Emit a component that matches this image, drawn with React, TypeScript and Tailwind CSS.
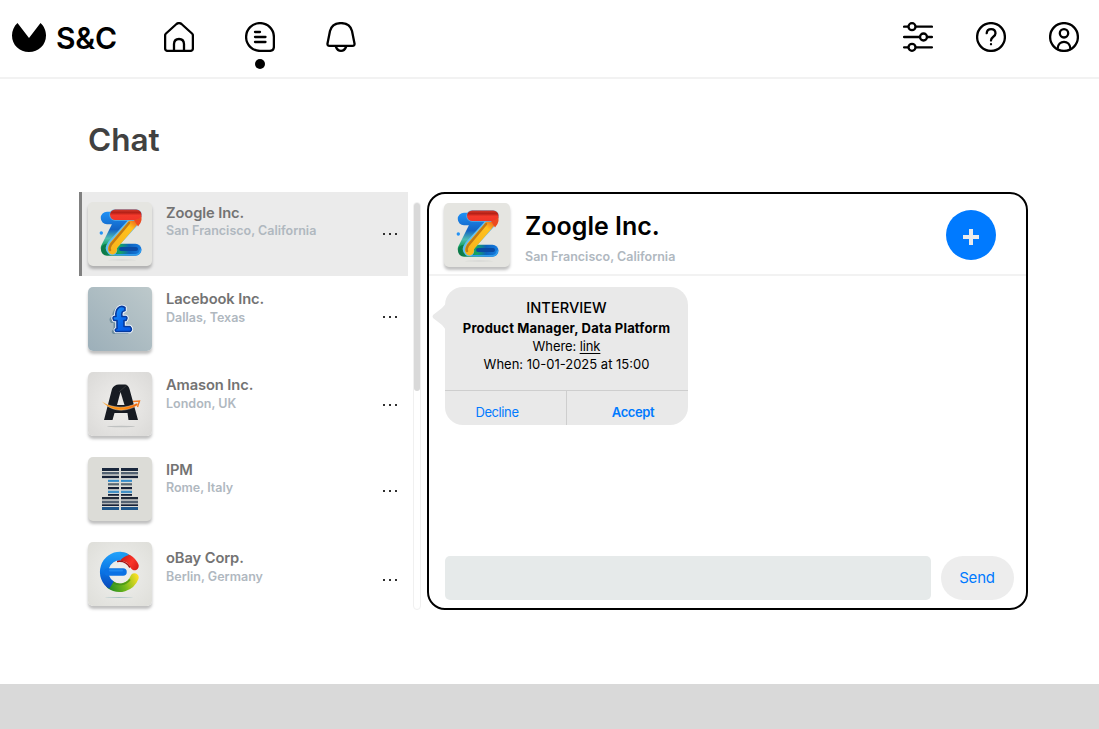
import React from "react";

type LogoProps = { className?: string };

function ZoogleLogo({ className }: LogoProps) {
  const id = React.useId();
  const red = id + "r", blue = id + "b", green = id + "g", yellow = id + "y";
  return (
    <svg viewBox="0 0 64 64" className={className}>
      <defs>
        <linearGradient id={blue} gradientUnits="userSpaceOnUse" x1="20" y1="10" x2="20" y2="54">
          <stop offset="0" stopColor="#1e90f5" />
          <stop offset="0.4" stopColor="#1263c4" />
          <stop offset="0.6" stopColor="#4fbdb0" />
          <stop offset="0.75" stopColor="#17a565" />
          <stop offset="1" stopColor="#076a45" />
        </linearGradient>
        <linearGradient id={green} gradientUnits="userSpaceOnUse" x1="16" y1="0" x2="52" y2="0">
          <stop offset="0" stopColor="#0b7a48" />
          <stop offset="0.45" stopColor="#15a565" />
          <stop offset="0.7" stopColor="#0d62bd" />
          <stop offset="1" stopColor="#1579dd" />
        </linearGradient>
        <linearGradient id={yellow} gradientUnits="userSpaceOnUse" x1="50" y1="14" x2="24" y2="48">
          <stop offset="0" stopColor="#e8401c" />
          <stop offset="0.15" stopColor="#f0741c" />
          <stop offset="0.32" stopColor="#ffc01f" />
          <stop offset="1" stopColor="#f8b51c" />
        </linearGradient>
        <linearGradient id={red} x1="0" y1="0" x2="0" y2="1">
          <stop offset="0" stopColor="#d43a2c" />
          <stop offset="0.3" stopColor="#b52017" />
          <stop offset="0.55" stopColor="#f3392b" />
          <stop offset="1" stopColor="#f0352a" />
        </linearGradient>
      </defs>
      <ellipse cx="34" cy="58" rx="14" ry="0.500" fill="#cfd1cf" />
      <path d="M19 16H34L19 46" fill="none" stroke={`url(#${blue})`} strokeWidth="12.500" strokeLinecap="round" strokeLinejoin="round" />
      <path d="M19 47.800H47.500" fill="none" stroke={`url(#${green})`} strokeWidth="12" strokeLinecap="round" />
      <path d="M33 47H48" fill="none" stroke="#0a4aa3" strokeWidth="4" strokeLinecap="round" />
      <path d="M26 52.800H48Q52 52 52.500 48" fill="none" stroke="#2f9ded" strokeWidth="1.600" strokeLinecap="round" />
      <path d="M45 20.500L24.500 43Q22 46 24 48" fill="none" stroke="#62bdf0" strokeWidth="10.500" strokeLinecap="round" />
      <path d="M47.500 18L26 43Q24 46 24.500 48" fill="none" stroke={`url(#${yellow})`} strokeWidth="8.800" strokeLinecap="round" />
      <path d="M41 21L23 42.500Q21 46 22 48" fill="none" stroke="#c27a14" strokeWidth="2.500" strokeLinecap="round" />
      <path d="M27 13H48" fill="none" stroke="#55aee8" strokeWidth="11.500" strokeLinecap="round" />
      <rect x="22" y="7.500" width="31.500" height="10.500" rx="5.250" fill={`url(#${red})`} />
      <path d="M46 18Q53 17 53.500 13V18Q53 21.500 50 24.500Z" fill="#ec4a20" />
      <circle cx="13.300" cy="31" r="1.700" fill="#2493f6" />
    </svg>
  );
}

function LacebookLogo({ className }: LogoProps) {
  const id = React.useId();
  const shape =
    "M37 21C32 18 27 22 28 30H26Q24 31 26 34H29V42Q26 43 28 45H42Q45 43 42 40H36V34H38Q40 31 38 30H34C33 25 35 25 37 24Z";
  return (
    <svg viewBox="0 0 64 64" className={className}>
      <linearGradient id={id} x1="0" y1="0" x2="1" y2="1">
        <stop offset="0" stopColor="#209bff" />
        <stop offset="0.55" stopColor="#0867ed" />
        <stop offset="1" stopColor="#0755e5" />
      </linearGradient>
      <path d={shape} fill="#5b7c91" stroke="#6f8e9f" strokeWidth="2" transform="translate(-2.5 1)" />
      <path d={shape} fill="#fff" stroke="#f5faff" strokeWidth="3.400" strokeLinejoin="round" transform="translate(0 -0.500)" />
      <path d={shape} fill={`url(#${id})`} stroke="#063a9d" strokeWidth="1.600" strokeLinejoin="round" transform="translate(0 -0.500)" />
    </svg>
  );
}

function AmasonLogo({ className }: LogoProps) {
  const id = React.useId();
  return (
    <svg viewBox="0 0 64 64" className={className}>
      <linearGradient id={id} x1="0" y1="0" x2="1" y2="0">
        <stop offset="0" stopColor="#f39316" />
        <stop offset="0.6" stopColor="#ff8a0b" />
        <stop offset="1" stopColor="#ee620b" />
      </linearGradient>
      <ellipse cx="33" cy="54.5" rx="14" ry="0.700" fill="#bfc1c1" />
      <path d="M16 48L24 17Q26 12.5 31 12.5H37Q40 12.5 41.5 17L50 48H40.500L39.5 41H26.500L24.500 48Z" fill="#171b22" />
      <path d="M32.5 20L29 33H36.500Z" fill="#e9e8e6" />
      <path d="M31 20L39 13" stroke="#555" strokeWidth="0.5" />
      <path d="M14 29.500C24 36.500 38 37 49 31L50 33C37 41 23 39.500 14 29.500Z" fill={`url(#${id})`} stroke="#f5e8d7" strokeWidth="0.4" />
      <path d="M45 29.500L51.500 29L49.500 35" fill="none" stroke="#ee7a24" strokeWidth="1.4" />
    </svg>
  );
}

const stripes: { y: number; x: number; h: number; color: string }[] = [
  { y: 11, x: 14, h: 3, color: "#19273c" },
  { y: 15, x: 14, h: 2.4, color: "#526171" },
  { y: 18.8, x: 14, h: 2.3, color: "#172238" },
  { y: 22.8, x: 20, h: 2.1, color: "#338bca" },
  { y: 26.2, x: 20, h: 2.2, color: "#586670" },
  { y: 30, x: 20, h: 2.2, color: "#172238" },
  { y: 33.7, x: 20, h: 2.4, color: "#418fc4" },
  { y: 37, x: 20, h: 1.8, color: "#172238" },
  { y: 40, x: 14, h: 2.3, color: "#202a38" },
  { y: 43.7, x: 14, h: 2.6, color: "#536171" },
  { y: 47.3, x: 14, h: 1.7, color: "#172238" },
  { y: 50, x: 14, h: 3, color: "#1e568b" },
];

function IpmLogo({ className }: LogoProps) {
  return (
    <svg viewBox="0 0 64 64" className={className}>
      {stripes.map((s) => (
        <g key={s.y} fill={s.color}>
          <rect x={s.x} y={s.y} width={31 - s.x} height={s.h} />
          <rect x="33" y={s.y} width={s.x === 14 ? 17 : 11} height={s.h} />
        </g>
      ))}
    </svg>
  );
}

function ObayLogo({ className }: LogoProps) {
  const id = React.useId();
  return (
    <svg viewBox="0 0 64 64" className={className}>
      <defs>
        <linearGradient id={id + "b"} gradientUnits="userSpaceOnUse" x1="24" y1="10" x2="22" y2="50">
          <stop offset="0" stopColor="#22a2fb" />
          <stop offset="0.5" stopColor="#0a74e4" />
          <stop offset="1" stopColor="#0a3fb0" />
        </linearGradient>
        <linearGradient id={id + "g"} gradientUnits="userSpaceOnUse" x1="20" y1="46" x2="50" y2="34">
          <stop offset="0" stopColor="#1f8a22" />
          <stop offset="0.5" stopColor="#74b91b" />
          <stop offset="1" stopColor="#ffe126" />
        </linearGradient>
        <linearGradient id={id + "r"} gradientUnits="userSpaceOnUse" x1="32" y1="14" x2="50" y2="26">
          <stop offset="0" stopColor="#c41717" />
          <stop offset="0.6" stopColor="#fa3529" />
          <stop offset="1" stopColor="#d81c17" />
        </linearGradient>
      </defs>
      <ellipse cx="31" cy="55.500" rx="14" ry="0.500" fill="#a8c2c4" />
      <g fill="none" strokeWidth="8.500" strokeLinejoin="round">
        <path d="M46.500 35.500A16 16 0 0 1 22 42.500" stroke={`url(#${id}g)`} strokeLinecap="round" />
        <path d="M42 37.500A12.500 12.500 0 0 1 24 39.500" stroke="#3d8f16" strokeOpacity="0.7" strokeWidth="1.800" />
        <path d="M31 14.500A16 16 0 0 1 46.500 24" stroke={`url(#${id}r)`} strokeLinecap="round" />
        <path d="M29 19.500A12.500 12.500 0 0 1 42 25.500" stroke="#a81212" strokeWidth="1.500" />
        <path d="M33 14.100A15.800 15.800 0 0 0 23.500 43.200" stroke={`url(#${id}b)`} />
        <path d="M32.500 9.900Q39 10 41 13Q36 14 32 18.500Z" fill="#189cf4" stroke="none" />
        <path d="M20 30H35" stroke="#0c72e4" strokeWidth="7.500" strokeLinecap="round" />
        <path d="M22 28.500H34" stroke="#1f88f0" strokeWidth="2" strokeLinecap="round" />
      </g>
    </svg>
  );
}

type Company = {
  name: string;
  place: string;
  Logo: React.ComponentType<LogoProps>;
  tile: string;
  text: string;
  gap: string;
  dots: string;
  row: string;
};

const companies: Company[] = [
  { name: "Zoogle Inc.", place: "San Francisco, California", Logo: ZoogleLogo, tile: "bg-[#e5e5e1]", text: "pt-3", gap: "mt-0", dots: "pt-[41px]", row: "h-[84px] mb-px border-[#808080] bg-[#ebebeb]" },
  { name: "Lacebook Inc.", place: "Dallas, Texas", Logo: LacebookLogo, tile: "bg-linear-to-bl from-[#bdc9cb] to-[#9cafb9]", text: "pt-[13px]", gap: "mt-px", dots: "pt-[39px]", row: "h-[85px] border-transparent" },
  { name: "Amason Inc.", place: "London, UK", Logo: AmasonLogo, tile: "bg-radial from-[#f0efed] to-[#dad9d7]", text: "pt-3.5", gap: "mt-px", dots: "pt-[42px]", row: "h-[85px] border-transparent" },
  { name: "IPM", place: "Rome, Italy", Logo: IpmLogo, tile: "bg-[#dcdcd7]", text: "pt-3.5", gap: "mt-0", dots: "pt-[43px]", row: "h-[85px] border-transparent" },
  { name: "oBay Corp.", place: "Berlin, Germany", Logo: ObayLogo, tile: "bg-radial from-[#f0f0ee] to-[#deded9]", text: "pt-[17px]", gap: "mt-px", dots: "pt-[47px]", row: "h-[78px] border-transparent" },
];

function CompanyRow({ name, place, Logo, tile, text, gap, dots, row }: Company) {
  return (
    <li className={`flex w-[329px] border-l-3 pl-1.5 ${row}`}>
      <div className={`mt-2.5 size-16 shrink-0 overflow-hidden rounded-[5px] shadow-[0_3px_3px_rgba(0,0,0,0.25)] ${tile}`}>
        <Logo className="size-16" />
      </div>
      <div className={`ml-3.5 w-[217px] ${text}`}>
        <p className="text-[14.7px] leading-[18px] font-semibold tracking-[-0.1px] whitespace-nowrap text-[#737373]">{name}</p>
        <p className={`text-[12.5px] leading-[18px] font-semibold whitespace-nowrap text-[#b0b8bf] ${gap}`}>{place}</p>
      </div>
      <button aria-label="More" className={`flex h-fit gap-1 ${dots}`}>
        <span className="size-0.5 bg-[#303030]" />
        <span className="size-0.5 bg-[#303030]" />
        <span className="size-0.5 bg-[#303030]" />
      </button>
    </li>
  );
}

const iconProps = { fill: "none", stroke: "#000", strokeWidth: 2.3, strokeLinecap: "round", strokeLinejoin: "round" } as const;

function Header() {
  return (
    <header className="flex h-[79px] items-start border-b-2 border-[#f2f2f2] pl-3 pr-5 pt-[22px]">
      <svg viewBox="0 0 34 30" className="h-[30px] w-[34px]">
        <path d="M5.500 1L17 16L28.500 1C32 4 34 9 34 13.500C34 23 26.500 30 17 30S0 23 0 13.500C0 9 2 4 5.500 1Z" />
      </svg>
      <span className="-mt-0.5 ml-2.5 w-[107px] text-[30px] leading-9 font-semibold tracking-[-0.2px]">S&amp;C</span>
      <svg viewBox="0 0 30 30" className="mr-[51px] ml-px size-[30px]" {...iconProps}>
        <path d="M1.100 13.500Q1.100 12.300 2 11.500L12.500 2Q15 0.200 17.500 2L28 11.500Q28.900 12.300 28.900 13.500V26.500Q28.900 28.900 26.500 28.900H3.500Q1.100 28.900 1.100 26.500Z" />
        <path d="M10 28.500V22Q10.200 17 15 17T20 22V28.500" />
      </svg>
      <div className="mr-[51px] flex w-[30px] flex-col items-center gap-[7px]">
        <svg viewBox="0 0 30 30" className="size-[30px]" {...iconProps}>
          <path d="M15 1.100A13.900 13.900 0 0 0 15 28.900H24.500Q28.900 28.900 28.900 24.500V15A13.900 13.900 0 0 0 15 1.100ZM10 10H15M10 15H20.500M10 20H20.500" />
        </svg>
        <span className="size-2.5 rounded-full bg-black" />
      </div>
      <svg viewBox="0 0 30 30" className="size-[30px]" {...iconProps}>
        <path d="M4 9Q6 1.100 15 1.100T26 9L28.500 21.500Q28.800 23.900 26.500 23.900H3.500Q1.200 23.900 1.500 21.500ZM10 25Q11.500 28.800 15 28.800T20 25" />
      </svg>
      <div className="ml-auto flex gap-[43px]">
        <svg viewBox="0 0 30 30" className="size-[30px]" {...iconProps}>
          <path d="M1.100 4.700H5M13 4.700H28.900M1.100 15H16.500M24.500 15H28.900M1.100 25.300H5M13 25.300H28.900" />
          <circle cx="9" cy="4.700" r="3.500" /><circle cx="20.500" cy="15" r="3.500" /><circle cx="9" cy="25.300" r="3.500" />
        </svg>
        <svg viewBox="0 0 30 30" className="size-[30px]" {...iconProps}>
          <circle cx="15" cy="15" r="13.900" />
          <path d="M10.700 11.200C11 5.800 19.300 5.800 19.500 11.200C19.500 15 15 14.500 15 18.500M15 22.200V22.300" />
        </svg>
        <svg viewBox="0 0 30 30" className="size-[30px]" {...iconProps}>
          <circle cx="15" cy="15" r="13.900" /><circle cx="15" cy="11.300" r="4.200" />
          <path d="M8.500 27C9 17.500 21 17.500 21.500 27" />
        </svg>
      </div>
    </header>
  );
}

function Interview() {
  return (
    <div className="relative mt-[11px] ml-4 h-[138px] w-[243px]">
      <svg viewBox="0 0 14 28" className="absolute top-4 -left-[13.5px] h-7 w-3.5">
        <path d="M14 0Q13 2 10 5L1 12Q0 13.500 1 15L10 22Q13 25 14 28Z" fill="#e9e9e9" />
      </svg>
      <div className="flex h-full flex-col overflow-hidden rounded-[18px] bg-[#e9e9e9] text-center text-[13px]">
        <div className="h-[103px] pt-[11px] leading-[18px]">
          <p className="text-[14.6px] leading-5 font-medium">INTERVIEW</p>
          <p className="leading-5 font-bold tracking-[0.17px]">Product Manager, Data Platform</p>
          <p className="-mt-px tracking-[-0.1px]">Where: <a className="underline underline-offset-2">link</a></p>
          <p>When: 10-01-2025 at 15:00</p>
        </div>
        <div className="flex h-[35px] border-t border-[#cecece] tracking-[-0.4px] text-[#007aff]">
          <button className="w-[122px] border-r border-[#cecece] pt-2.5 pr-[17px]">Decline</button>
          <button className="flex-1 pt-2.5 pl-[11px] font-semibold">Accept</button>
        </div>
      </div>
    </div>
  );
}

export default function App() {
  return (
    <div className="flex h-[729px] w-[1099px] flex-col overflow-hidden bg-white font-['Inter',sans-serif] text-black">
      <Header />
      <main className="flex-1 pl-[79px]">
        <h1 className="mt-[41px] ml-[9px] h-[72px] text-[31.5px] leading-10 font-semibold text-[#414141]">Chat</h1>
        <div className="flex h-[418px]">
          <ul className="w-[334px]">
            {companies.map((c) => <CompanyRow key={c.name} {...c} />)}
          </ul>
          <div className="mt-2.5 mr-1.5 h-[408px] w-2 rounded-full border border-[#f0f0f0]">
            <div className="h-[188px] w-1.5 rounded-full bg-[#d9d9d9]" />
          </div>
          <section className="flex w-[601px] flex-col rounded-[18px] border-2 border-black">
            <div className="flex h-[82px] shrink-0 border-b-2 border-[#f2f2f2] pl-[15px]">
              <div className="mt-[9px] h-16 w-[66px] overflow-hidden rounded-[5px] bg-[#e5e5e1] pl-px shadow-[0_3px_3px_rgba(0,0,0,0.25)]">
                <ZoogleLogo className="size-16" />
              </div>
              <div className="ml-[15px] pt-4">
                <h2 className="text-[25px] leading-8 font-semibold">Zoogle Inc.</h2>
                <p className="mt-1.5 text-[12.5px] leading-[18px] font-semibold text-[#b0b8bf]">San Francisco, California</p>
              </div>
              <button aria-label="Add" className="mt-4 mr-[30px] ml-auto flex size-[50px] items-center justify-center rounded-full bg-[#007aff]">
                <svg viewBox="0 0 16 16" className="mt-1 size-4" fill="none" stroke="#ebebeb" strokeWidth="4"><path d="M8 0V16M0 8H16" /></svg>
              </button>
            </div>
            <Interview />
            <div className="mt-auto mb-2 ml-4 flex gap-2.5">
              <input aria-label="Message" className="h-11 w-[486px] rounded-[5px] bg-[#e6eaea] px-3 outline-none" />
              <button className="h-11 w-[73px] rounded-full bg-[#ededed] pr-px text-[15px] tracking-[-0.2px] text-[#007aff]">Send</button>
            </div>
          </section>
        </div>
      </main>
      <footer className="h-[45px] shrink-0 bg-[#d9d9d9]" />
    </div>
  );
}
